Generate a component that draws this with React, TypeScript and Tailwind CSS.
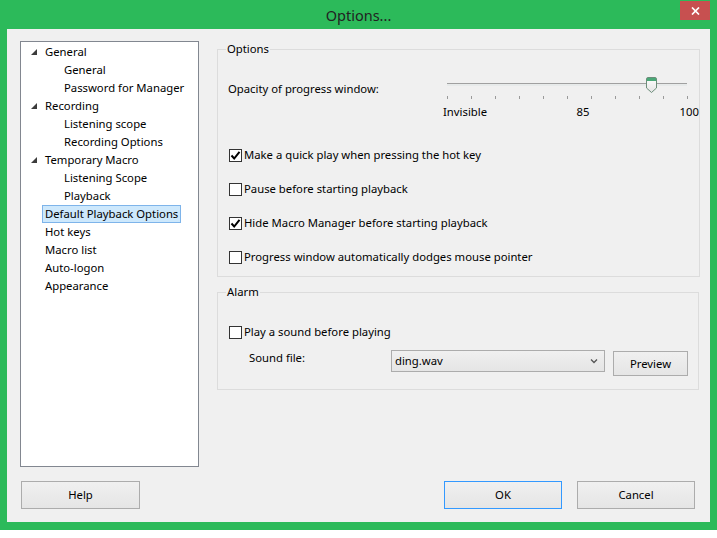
import React from "react";

const font = "font-['Noto_Sans',sans-serif] text-[11.3px] leading-[16px] text-black";

type Node = { label: string; level: 0 | 1; arrow?: boolean; selected?: boolean };

const tree: Node[] = [
  { label: "General", level: 0, arrow: true },
  { label: "General", level: 1 },
  { label: "Password for Manager", level: 1 },
  { label: "Recording", level: 0, arrow: true },
  { label: "Listening scope", level: 1 },
  { label: "Recording Options", level: 1 },
  { label: "Temporary Macro", level: 0, arrow: true },
  { label: "Listening Scope", level: 1 },
  { label: "Playback", level: 1 },
  { label: "Default Playback Options", level: 0, selected: true },
  { label: "Hot keys", level: 0 },
  { label: "Macro list", level: 0 },
  { label: "Auto-logon", level: 0 },
  { label: "Appearance", level: 0 },
];

function Arrow() {
  return (
    <svg width="6" height="6" viewBox="0 0 6 6" className="shrink-0">
      <polygon points="6,0 6,6 0,6" fill="#3c3c3c" />
    </svg>
  );
}

function TreeRow({ node }: { node: Node }) {
  if (node.level === 1) {
    return (
      <div className="flex h-[18px] items-center pl-[43px]">
        <span>{node.label}</span>
      </div>
    );
  }
  return (
    <div className="flex h-[18px] items-center pl-[10px]">
      <span className="flex w-[11px] justify-start">{node.arrow && <Arrow />}</span>
      {node.selected ? (
        <span className="border border-[#7eb4ea] bg-[#cde8fc] px-[2px] leading-[16px]">
          {node.label}
        </span>
      ) : (
        <span className="ml-[3px]">{node.label}</span>
      )}
    </div>
  );
}

function CheckBox({ checked, label }: { checked?: boolean; label: string }) {
  return (
    <div className="flex h-[34px] items-center pl-[11px]">
      <span className="flex h-[13px] w-[13px] shrink-0 items-center justify-center border border-[#333333] bg-white">
        {checked && (
          <svg width="11" height="11" viewBox="0 0 11 11">
            <path d="M1.5 5.5 L4.2 8.5 L9.5 1.8" fill="none" stroke="#000" strokeWidth="2" />
          </svg>
        )}
      </span>
      <span className="ml-[2px]">{label}</span>
    </div>
  );
}

function Button({ label, width, primary }: { label: string; width: string; primary?: boolean }) {
  return (
    <button
      type="button"
      className={`${width} h-[28px] border bg-linear-to-b from-[#f0f0f0] to-[#e5e5e5] ${
        primary ? "border-[#3399ff]" : "border-[#acacac]"
      }`}
    >
      {label}
    </button>
  );
}

function Slider() {
  const ticks = Array.from({ length: 11 }, (_, i) => i);
  return (
    <div className="w-[256px] pt-[21px]">
      <div className="relative ml-[4px] h-[15px] w-[240px]">
        <div className="absolute left-0 right-0 top-[5px] h-[3px] border-t border-[#a0a0a0] bg-[#e7eaea]" />
        <svg width="11" height="16" viewBox="0 0 11 16" className="absolute left-[199px] top-[-1px]">
          <defs>
            <linearGradient id="thumb" x1="0" y1="0" x2="0" y2="1">
              <stop offset="0" stopColor="#ffffff" />
              <stop offset="1" stopColor="#e3e3e3" />
            </linearGradient>
          </defs>
          <path d="M0.5 2 Q0.5 0.5 2 0.5 H9 Q10.5 0.5 10.5 2 V11 L5.5 15.5 L0.5 11 Z" fill="url(#thumb)" stroke="#6c8d7a" />
          <rect x="1" y="1" width="9" height="3" fill="#4aa877" />
        </svg>
      </div>
      <div className="ml-[4px] mt-[3px] flex h-[3px] w-[241px] justify-between">
        {ticks.map((t) => (
          <span key={t} className="h-[3px] w-px bg-[#9a9a9a]" />
        ))}
      </div>
      <div className="mt-[5px] flex">
        <span className="w-[110px]">Invisible</span>
        <span className="w-[60px] text-center">85</span>
        <span className="flex-1 text-right">100</span>
      </div>
    </div>
  );
}

export default function App() {
  return (
    <div className={`h-[538px] w-[717px] overflow-hidden bg-white ${font}`}>
      <div className="flex h-[530px] flex-col bg-[#2cba5a]">
        {/* title bar */}
        <div className="relative flex h-[29px] items-center justify-center">
          <span className="text-[14.5px] leading-[20px] text-[#222]">Options...</span>
          <div className="absolute right-[7px] top-[1px] flex h-[19px] w-[30px] items-center justify-center bg-[#c75050]">
            <svg width="9" height="8" viewBox="0 0 9 8">
              <path d="M1 0.5 L8 7.5 M8 0.5 L1 7.5" stroke="#fff" strokeWidth="1.7" />
            </svg>
          </div>
        </div>

        {/* client area */}
        <div className="mx-[7px] flex h-[493px] flex-col bg-[#f0f0f0]">
          <div className="flex pt-[12px]">
            <div className="ml-[13px] h-[426px] w-[179px] border border-[#828790] bg-white pt-[1px]">
              {tree.map((n, i) => (
                <TreeRow key={i} node={n} />
              ))}
            </div>

            <div className="ml-[18px] flex w-[482px] flex-col">
              <fieldset className="h-[236px] border border-[#dcdcdc]">
                <legend className="ml-[8px] px-[1px]">Options</legend>
                <div className="flex h-[64px]">
                  <div className="w-[225px] pl-[10px] pt-[24px]">Opacity of progress window:</div>
                  <Slider />
                </div>
                <div className="mt-[17px]">
                  <CheckBox checked label="Make a quick play when pressing the hot key" />
                  <CheckBox label="Pause before starting playback" />
                  <CheckBox checked label="Hide Macro Manager before starting playback" />
                  <CheckBox label="Progress window automatically dodges mouse pointer" />
                </div>
              </fieldset>

              <fieldset className="mt-[7px] h-[106px] border border-[#dcdcdc]">
                <legend className="ml-[8px] px-[1px]">Alarm</legend>
                <div className="pt-[15px]">
                  <CheckBox label="Play a sound before playing" />
                  <div className="mt-[1px] flex items-start">
                    <span className="w-[173px] pl-[31px]">Sound file:</span>
                    <div className="flex h-[22px] w-[214px] items-center justify-between border border-[#acacac] bg-linear-to-b from-[#f0f0f0] to-[#e5e5e5] pl-[3px] pr-[6px]">
                      <span>ding.wav</span>
                      <svg width="8" height="5" viewBox="0 0 8 5">
                        <path d="M1 0.5 L4 3.5 L7 0.5" fill="none" stroke="#555" strokeWidth="1.3" />
                      </svg>
                    </div>
                    <button
                      type="button"
                      className="ml-[8px] mt-[1px] h-[25px] w-[75px] border border-[#acacac] bg-linear-to-b from-[#f0f0f0] to-[#e5e5e5]"
                    >
                      Preview
                    </button>
                  </div>
                </div>
              </fieldset>
            </div>
          </div>

          {/* bottom buttons */}
          <div className="mt-[14px] flex">
            <div className="ml-[14px]">
              <Button label="Help" width="w-[119px]" />
            </div>
            <div className="flex-1" />
            <Button label="OK" width="w-[118px]" primary />
            <div className="ml-[15px] mr-[15px]">
              <Button label="Cancel" width="w-[118px]" />
            </div>
          </div>
        </div>
      </div>
    </div>
  );
}
